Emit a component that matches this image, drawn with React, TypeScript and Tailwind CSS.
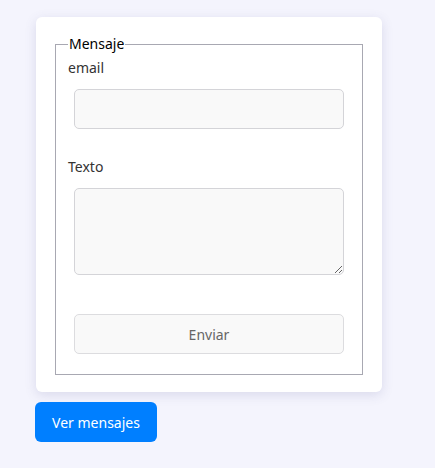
import React from "react";

export default function App() {
  return (
    <div
      className="min-h-[468px] bg-[#f4f4fd] pl-[35px] pt-[17px]"
      style={{ fontFamily: '"Noto Sans", sans-serif' }}
    >
      <div className="ml-[1px] w-[346px] rounded-md bg-white px-[19px] pt-[17px] pb-[17px] shadow-[0_3px_12px_rgba(80,80,140,0.16)]">
        <fieldset className="border border-[#a8a8b2] px-[12px] pb-[20px]">
          <legend className="px-[1px] text-[14px] leading-[20px] text-black">Mensaje</legend>
          <label className="mt-[4px] block text-[14px] leading-[20px] text-[#333]">email</label>
          <input
            type="text"
            className="mx-[6px] mt-[11px] block h-[40px] w-[270px] rounded-[5px] border border-[#d4d4d8] bg-[#f9f9f9] px-2 outline-none"
          />
          <label className="mt-[28px] block text-[14px] leading-[20px] text-[#333]">Texto</label>
          <textarea className="mx-[6px] mt-[11px] block h-[87px] w-[270px] rounded-[5px] border border-[#d4d4d8] bg-[#f9f9f9] px-2 outline-none" />
          <button
            type="button"
            className="mx-[6px] mt-[39px] block h-[40px] w-[270px] rounded-[5px] border border-[#dcdcdf] bg-[#f9f9f9] text-[14px] text-[#666]"
          >
            Enviar
          </button>
        </fieldset>
      </div>
      <button
        type="button"
        className="mt-[10px] h-[40px] w-[122px] rounded-[6px] bg-[#007fff] text-[14px] text-white"
      >
        Ver mensajes
      </button>
    </div>
  );
}
